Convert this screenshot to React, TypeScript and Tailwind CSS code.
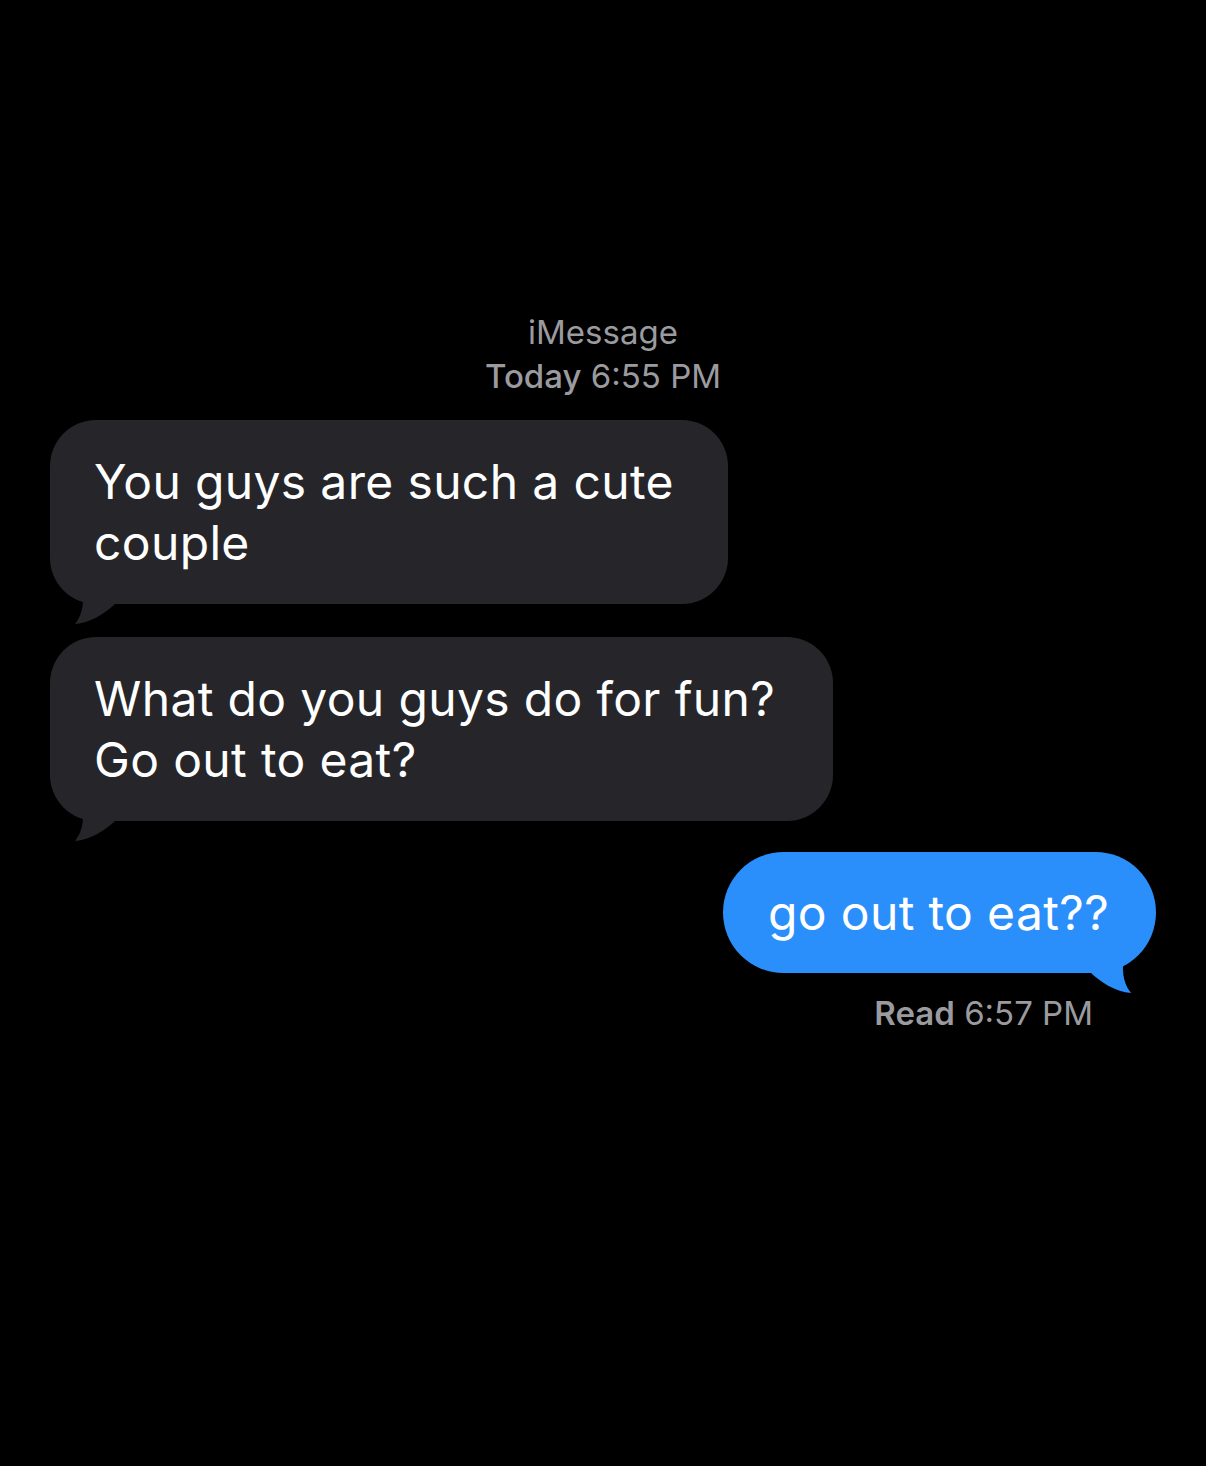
const FONT = { fontFamily: 'Inter, "Noto Sans", sans-serif' };

function TailLeft({ color }: { color: string }) {
  return (
    <svg
      className="absolute left-[18px] bottom-[-21px]"
      width="60"
      height="40"
      viewBox="0 0 60 40"
    >
      <path d="M14 0 C16 14 16 28 7 39 C22 38 38 28 48 18 L48 0 Z" fill={color} />
    </svg>
  );
}

function TailRight({ color }: { color: string }) {
  return (
    <svg
      className="absolute right-[18px] bottom-[-21px]"
      width="60"
      height="40"
      viewBox="0 0 60 40"
    >
      <path d="M46 0 C44 14 44 28 53 39 C38 38 22 28 12 18 L12 0 Z" fill={color} />
    </svg>
  );
}

export default function App() {
  return (
    <div className="w-[1206px] h-[1466px] bg-black text-white" style={FONT}>
      <div className="pt-[310px] flex flex-col items-center text-[33px] leading-[44px] text-[#9b9b9f]">
        <div>iMessage</div>
        <div>
          <span className="font-medium">Today</span> 6:55 PM
        </div>
      </div>

      <div className="mt-[22px] pl-[50px] flex flex-col items-start gap-[33px]">
        <div className="relative w-[678px] rounded-[46px] bg-[#26262a] pl-[44px] pr-[20px] py-[31px] text-[48px] leading-[61px] tracking-[0.35px]">
          <TailLeft color="#26262a" />
          <p className="relative">
            You guys are such a cute
            <br />
            couple
          </p>
        </div>
        <div className="relative w-[783px] rounded-[46px] bg-[#26262a] pl-[44px] pr-[20px] py-[31px] text-[48px] leading-[61px] tracking-[0.35px]">
          <TailLeft color="#26262a" />
          <p className="relative">
            What do you guys do for fun?
            <br />
            Go out to eat?
          </p>
        </div>
      </div>

      <div className="mt-[31px] pr-[50px] flex flex-col items-end">
        <div className="relative w-[433px] rounded-[61px] bg-[#2b8ffb] pl-[45px] pr-[20px] py-[30px] text-[48px] leading-[61px] tracking-[0.35px]">
          <TailRight color="#2b8ffb" />
          <p className="relative">go out to eat??</p>
        </div>
        <div className="mt-[18px] mr-[63px] text-[33px] leading-[44px] text-[#9b9b9f]">
          <span className="font-semibold">Read</span> 6:57 PM
        </div>
      </div>
    </div>
  );
}
